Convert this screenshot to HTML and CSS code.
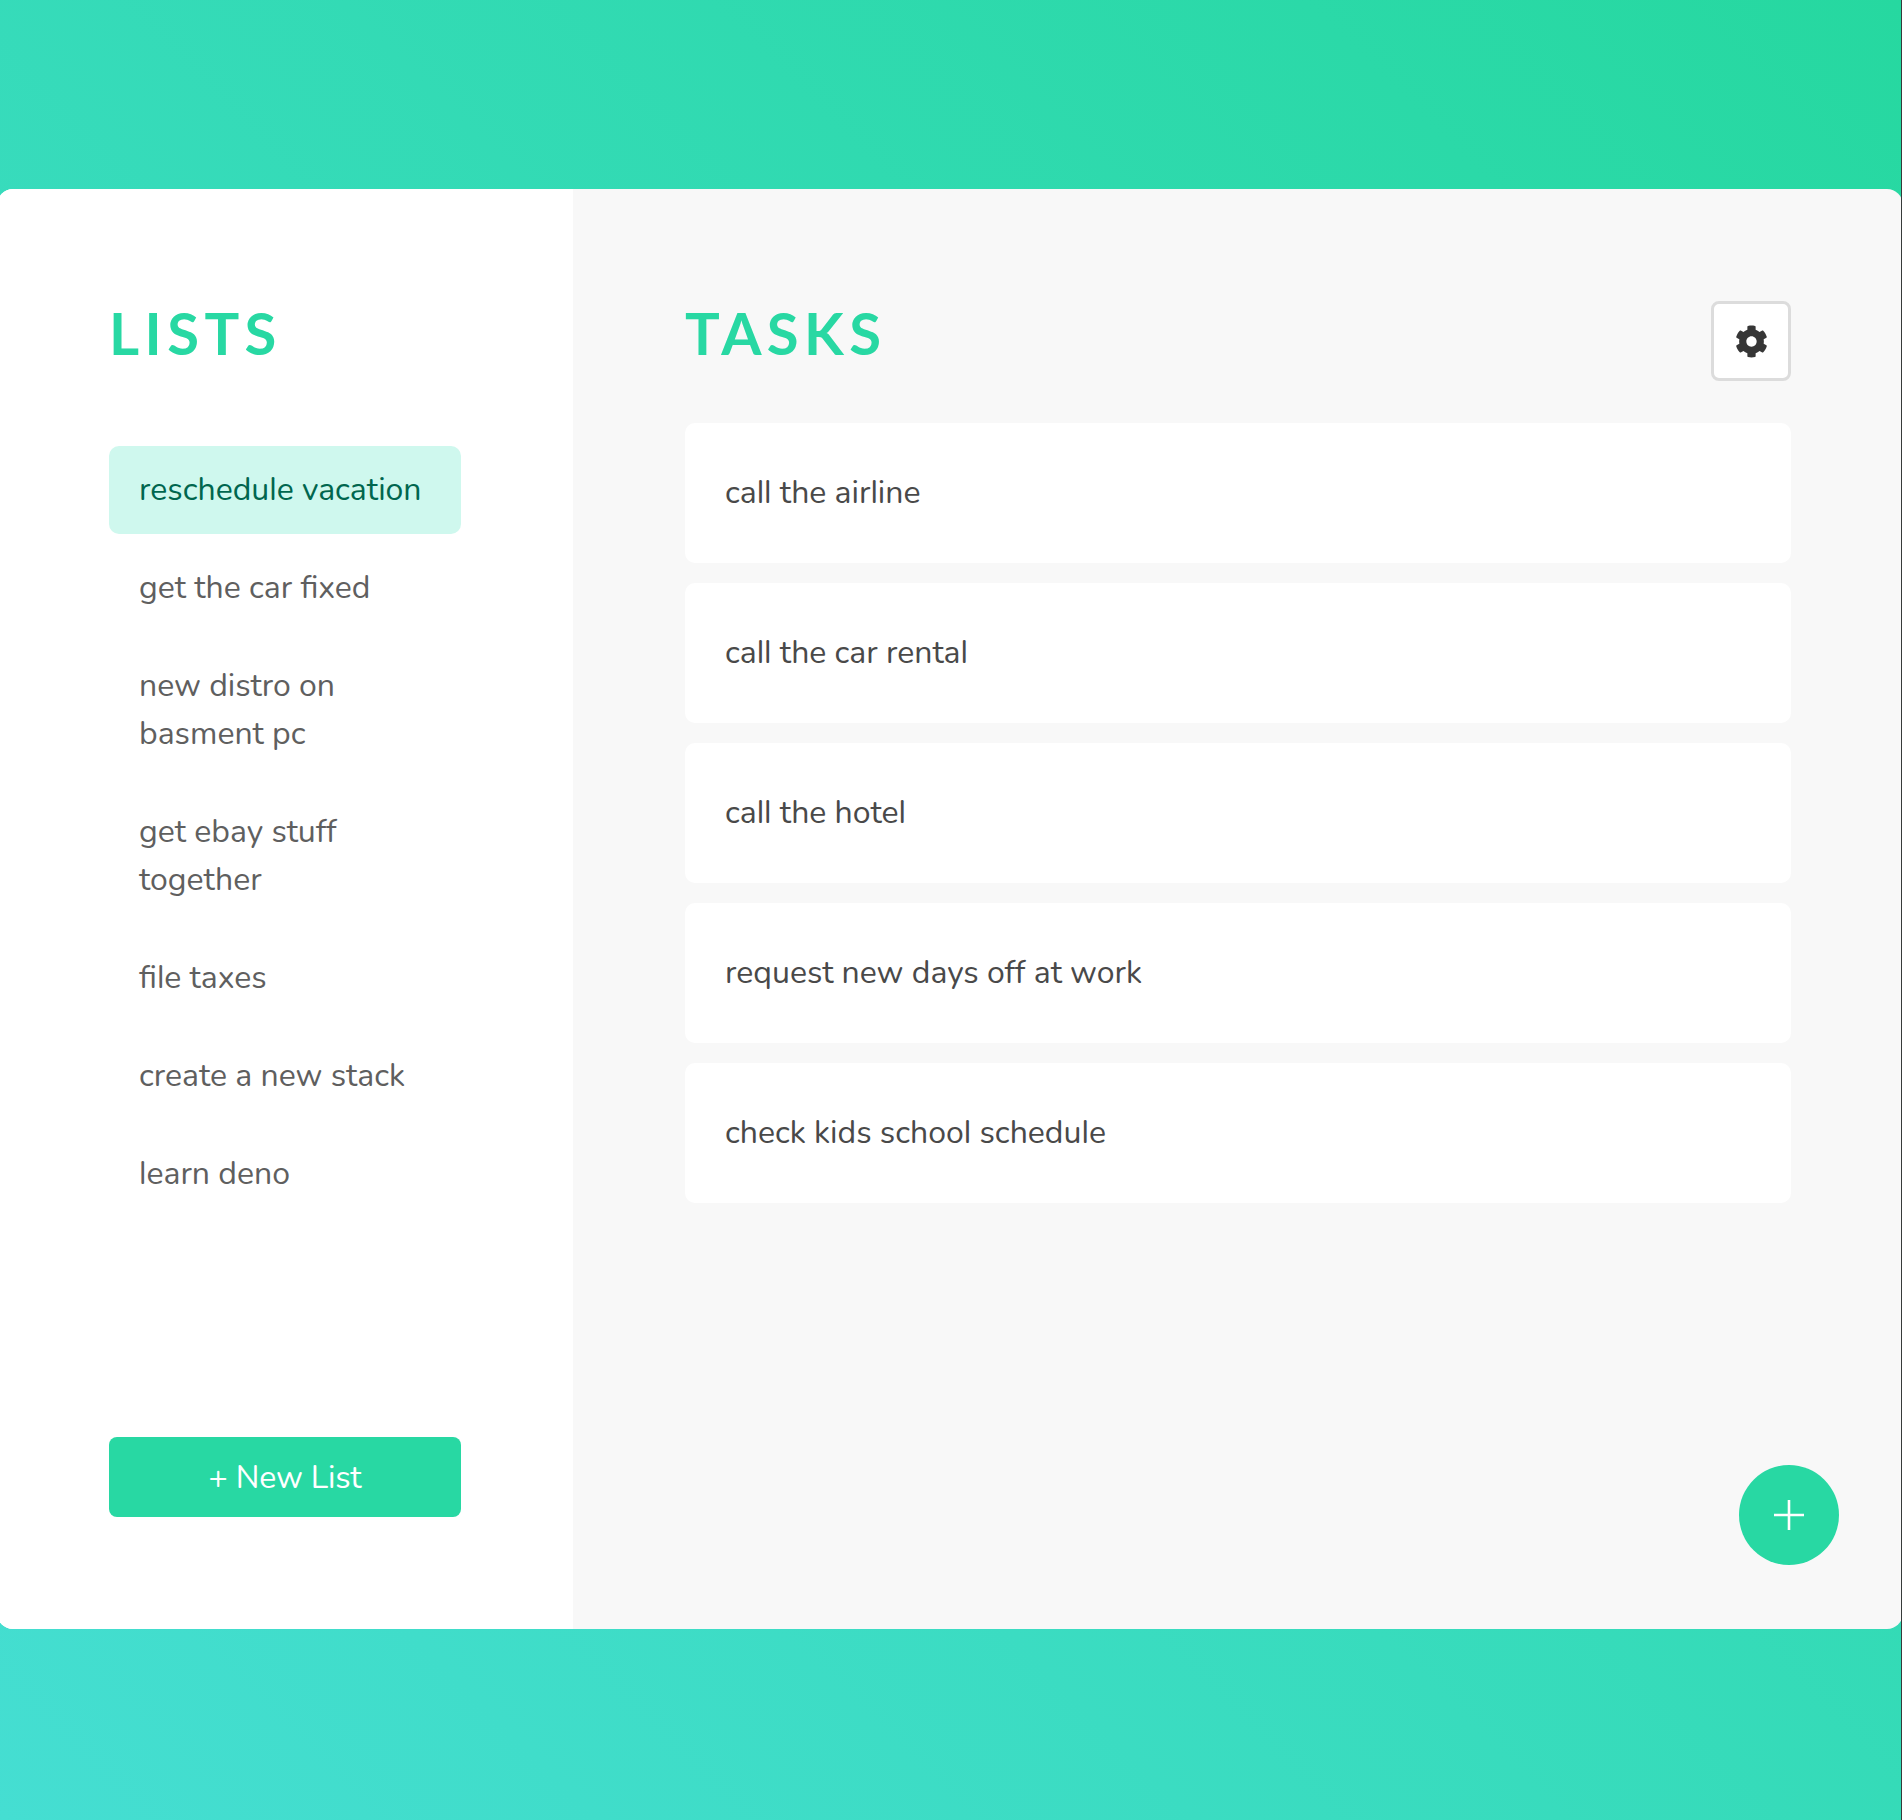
FILE: index.html
```html
<!DOCTYPE html>
<html lang="en">
<head>
<meta charset="utf-8">
<title>Tasks</title>
<link rel="stylesheet" href="styles.css">
</head>
<body>
<div class="page">
  <div class="panel">
    <aside class="sidebar">
      <h1 class="title">LISTS</h1>
      <nav class="lists">
        <a class="list list-active">reschedule vacation</a>
        <a class="list">get the car fixed</a>
        <a class="list">new distro on basment pc</a>
        <a class="list">get ebay stuff together</a>
        <a class="list">file taxes</a>
        <a class="list">create a new stack</a>
        <a class="list">learn deno</a>
      </nav>
      <button class="new-list">+ New List</button>
    </aside>
    <main class="main">
      <header class="main-header">
        <h1 class="title">TASKS</h1>
        <button class="settings" aria-label="Settings">
          <svg class="cog" viewBox="0 0 512 512"><path fill="currentColor" d="M487.4 315.7l-42.6-24.6c4.3-23.2 4.3-47 0-70.2l42.6-24.6c4.9-2.8 7.1-8.6 5.5-14-11.1-35.6-30-67.8-54.7-94.6-3.8-4.1-10-5.1-14.8-2.3L380.8 110c-17.9-15.4-38.5-27.3-60.8-35.1V25.8c0-5.6-3.9-10.5-9.4-11.7-36.7-8.2-74.3-7.8-109.2 0-5.5 1.2-9.4 6.1-9.4 11.7V75c-22.2 7.9-42.8 19.8-60.8 35.1L88.7 85.5c-4.9-2.8-11-1.9-14.8 2.3-24.7 26.7-43.6 58.9-54.7 94.6-1.7 5.4.6 11.2 5.5 14L67.3 221c-4.3 23.2-4.3 47 0 70.2l-42.6 24.6c-4.9 2.8-7.1 8.6-5.5 14 11.1 35.6 30 67.8 54.7 94.6 3.8 4.1 10 5.1 14.8 2.3l42.6-24.6c17.9 15.4 38.5 27.3 60.8 35.1v49.2c0 5.6 3.9 10.5 9.4 11.7 36.7 8.2 74.3 7.8 109.2 0 5.5-1.2 9.4-6.1 9.4-11.7v-49.2c22.2-7.9 42.8-19.8 60.8-35.1l42.6 24.6c4.9 2.8 11 1.9 14.8-2.3 24.7-26.7 43.6-58.9 54.7-94.6 1.5-5.5-.7-11.3-5.6-14.1zM256 336c-44.1 0-80-35.9-80-80s35.9-80 80-80 80 35.9 80 80-35.9 80-80 80z"/></svg>
        </button>
      </header>
      <div class="tasks">
        <div class="task">call the airline</div>
        <div class="task">call the car rental</div>
        <div class="task">call the hotel</div>
        <div class="task">request new days off at work</div>
        <div class="task">check kids school schedule</div>
      </div>
      <button class="add-task" aria-label="Add task">
        <svg class="plus" viewBox="0 0 30 30"><path d="M15 0v30M0 15h30" stroke="currentColor" stroke-width="2.6"/></svg>
      </button>
    </main>
  </div>
</div>
</body>
</html>
```
FILE: styles.css
```css
* { box-sizing: border-box; }

html {
  background: #373b3a;
}

/* ss02 selects Nunito's straight, tailless l. */
body {
  margin: 0;
  overflow: hidden;
  font: 32px/48px Nunito, Lato, "Open Sans", sans-serif;
  font-feature-settings: "ss02";
}

button {
  border: 0;
  margin: 0;
  padding: 0;
  font: inherit;
}

.page {
  display: flex;
  width: calc(100% - 1px);
  height: 1820px;
  padding: 189px 0 191px;
  overflow: hidden;
  background: linear-gradient(45deg, #45ded2, #26d8a0);
}

/* The panel is slightly wider than the page and bleeds over both edges. */
.panel {
  display: flex;
  flex: 0 0 1906px;
  margin-left: -3px;
  height: 1440px;
  border-radius: 16px;
  overflow: hidden;
  background: #f8f8f8;
}

.sidebar {
  display: flex;
  flex-direction: column;
  width: 576px;
  padding: 112px;
  background: #fff;
}

.title {
  margin: 0;
  font: 700 58px/64px Lato, sans-serif;
  letter-spacing: 5.42px;
  color: #28d8a3;
}

.lists {
  display: flex;
  flex-direction: column;
  gap: 10px;
  margin-top: 81px;
}

.list {
  padding: 20px 30px;
  border-radius: 10px;
  color: #5f5f5f;
}

.list-active {
  background: #cff8ee;
  color: #00664e;
}

.new-list {
  height: 80px;
  margin-top: auto;
  padding-top: 1px;
  border-radius: 8px;
  background: #28d8a3;
  color: #fff;
  letter-spacing: -0.15px;
}

.main {
  position: relative;
  flex: 1;
  padding: 112px;
}

.main-header {
  display: flex;
  justify-content: space-between;
  align-items: flex-start;
}

.settings {
  display: flex;
  align-items: center;
  justify-content: center;
  width: 80px;
  height: 80px;
  border: 3px solid #dcdcdc;
  border-radius: 8px;
  background: #fff;
  color: #363636;
}

.cog {
  width: 33px;
  height: 33px;
}

.tasks {
  display: flex;
  flex-direction: column;
  gap: 20px;
  margin-top: 42px;
}

.task {
  height: 140px;
  padding: 46px 40px;
  border-radius: 10px;
  background: #fff;
  color: #494949;
}

.add-task {
  position: absolute;
  right: 64px;
  bottom: 64px;
  display: flex;
  align-items: center;
  justify-content: center;
  width: 100px;
  height: 100px;
  border-radius: 50%;
  background: #28d8a3;
  color: #fff;
}

.plus {
  width: 30px;
  height: 30px;
}
```
